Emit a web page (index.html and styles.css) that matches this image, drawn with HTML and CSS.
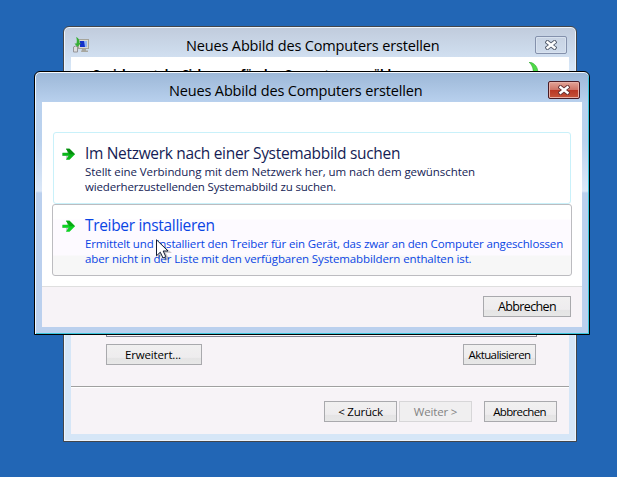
FILE: index.html
```html
<!DOCTYPE html>
<html lang="de">
<head>
<meta charset="utf-8">
<title>Neues Abbild des Computers erstellen</title>
<link rel="stylesheet" href="styles.css">
</head>
<body>
<main class="desktop">
  <section class="window wizard">
    <header class="titlebar">
      <svg class="app-icon" width="17" height="17" viewBox="0 0 17 17">
        <rect x="5.500" y="2.500" width="10" height="9" fill="#d9d9d2" stroke="#a5a49b"/>
        <rect x="7" y="4" width="7" height="6" fill="#1430c8"/>
        <path d="M11 4h3v6h-2z" fill="#8fb4f4"/>
        <path d="M9 12h4v1.500h2V15H8z" fill="#a7a79f"/>
        <path d="M.5 10q2-2 4 0v5h-4z" fill="#ddd" stroke="#95959a"/>
        <path d="M3 0c3 1 4 4 3.500 6H8L4.500 10 1.500 6.500h2C4 4 4 2 3 0z" fill="#37ae36"/>
      </svg>
      <h1 class="title wizard-title">Neues Abbild des Computers erstellen</h1>
      <button class="close" aria-label="Schließen">
        <svg width="12" height="10" viewBox="0 0 12 10"><path d="M2.500 2.200l7 5.600M9.500 2.200l-7 5.600" stroke="#525b6b" stroke-width="4.200" stroke-linecap="square"/><path d="M2.500 2.200l7 5.600M9.500 2.200l-7 5.600" stroke="#fff" stroke-width="2.400" stroke-linecap="square"/></svg>
      </button>
    </header>
    <div class="client wizard-client">
      <div class="banner">
        <h2 class="heading">Speicherort der Sicherung für den Computer auswählen</h2>
        <svg class="swoosh" width="12" height="16" viewBox="0 0 12 16"><path d="M0 0c6 1 9 5 9 12H4C5 7 3 3 0 0z" fill="#4fdc48" stroke="#2ba62c" stroke-width=".6"/></svg>
      </div>
      <div class="list"></div>
      <div class="row list-actions">
        <button class="btn wide">Erweitert...</button>
        <button class="btn refresh">Aktualisieren</button>
      </div>
      <footer class="row nav">
        <button class="btn back">&lt; Zurück</button>
        <button class="btn disabled" disabled>Weiter &gt;</button>
        <button class="btn cancel">Abbrechen</button>
      </footer>
    </div>
  </section>

  <section class="window dialog">
    <header class="titlebar">
      <h1 class="title dialog-title">Neues Abbild des Computers erstellen</h1>
      <button class="close red" aria-label="Schließen">
        <svg width="12" height="10" viewBox="0 0 12 10"><path d="M2.500 2.200l7 5.600M9.500 2.200l-7 5.600" stroke="#653033" stroke-width="4.200" stroke-linecap="square"/><path d="M2.500 2.200l7 5.600M9.500 2.200l-7 5.600" stroke="#fff" stroke-width="2.400" stroke-linecap="square"/></svg>
      </button>
    </header>
    <div class="client dialog-client">
      <div class="options">
        <a class="option">
          <svg class="arrow" width="16" height="15" viewBox="0 0 16 15"><path d="M1 6h5V2l1 3v6l-2 2V9H1z" fill="#c9c9cd"/><path d="M1.500 5.700h6L5 1.700h3.500L14 7.200l-5.500 5.500H5l2.500-4H1.500z" fill="#09b818"/><path d="M5 1.700h3.500L14 7.200H8.500z" fill="#078c0f"/></svg>
          <div class="copy">
            <h3>Im Netzwerk nach einer Systemabbild suchen</h3>
            <p class="search-1">Stellt eine Verbindung mit dem Netzwerk her, um nach dem gewünschten</p>
            <p class="search-2">wiederherzustellenden Systemabbild zu suchen.</p>
          </div>
        </a>
        <a class="option hover">
          <svg class="arrow" width="16" height="15" viewBox="0 0 16 15"><path d="M1 6h5V2l1 3v6l-2 2V9H1z" fill="#c9c9cd"/><path d="M1.500 5.700h6L5 1.700h3.500L14 7.200l-5.500 5.500H5l2.500-4H1.500z" fill="#0bd422"/><path d="M5 1.700h3.500L14 7.200H8.500z" fill="#08a814"/></svg>
          <div class="copy">
            <h3>Treiber installieren</h3>
            <p class="driver-1">Ermittelt und installiert den Treiber für ein Gerät, das zwar an den Computer angeschlossen</p>
            <p class="driver-2">aber nicht in der Liste mit den verfügbaren Systemabbildern enthalten ist.</p>
          </div>
        </a>
      </div>
      <footer class="row dialog-footer">
        <button class="btn big">Abbrechen</button>
      </footer>
    </div>
  </section>
  <svg class="cursor" width="16" height="23" viewBox="0 0 16 23"><path d="M2 2v18l4-4 3 6 4-2-3-6h6z" fill="#0003"/><path d="M.5.8v16l3.800-3.600L7 19l2.800-1.300L7.200 12H12z" fill="#fff" stroke="#111a33"/></svg>
</main>
</body>
</html>
```
FILE: styles.css
```css
* { box-sizing: border-box; }
body { margin: 0; font-family: "Open Sans", "Noto Sans", sans-serif; color: #000; }
h1, h2, h3, p { margin: 0; font-weight: 400; white-space: nowrap; }
button { font: inherit; padding: 0; }
.desktop { position: relative; width: 617px; height: 477px; background: #2266b5; overflow: hidden; }

.window { position: absolute; display: flex; flex-direction: column; border: 1px solid #43464b; border-radius: 6px 6px 0 0; padding: 0 7px 7px; }
.wizard { left: 63px; top: 26px; width: 514px; height: 416px; background: linear-gradient(#c0cbdc, #d6e6f7 40px); box-shadow: inset 0 0 0 1px #edf4fb; }
.dialog { left: 34px; top: 71px; width: 556px; height: 264px; border-color: #000; background: linear-gradient(#9cb7d7, #b9d1ee 31px, #bbd2ee 70px, #dce8f8 119px, #bbd0ee 121px); box-shadow: inset 0 1px #f5f9fd, inset 1px 0 #edf6ff, inset -1px -1px #3bc6dd; }
.titlebar { display: flex; align-items: center; flex: none; height: 30px; }
.app-icon { margin: 6px 0 0 2px; }
.title { flex: 1; font-size: 14.5px; line-height: 20px; letter-spacing: -.15px; }
.wizard-title { padding: 8px 0 0 96px; }
.dialog-title { padding: 8px 0 0 127px; }
.close { display: flex; align-items: center; justify-content: center; width: 32px; height: 18px; margin: 6px 2px 0 0; border: 1px solid #8491ac; border-radius: 2px; background: linear-gradient(#c8d3e3, #d0dcec); box-shadow: inset 0 0 0 1px #d8e2ef; }
.close.red { border-color: #491c25; background: linear-gradient(#e2a497, #cf7466 48%, #b93724 52%, #c5543a); box-shadow: inset 0 0 0 1px #e8afa6; }

.client { flex: 1; display: flex; flex-direction: column; background: #f7f3f7; min-height: 0; }
.banner { display: flex; justify-content: space-between; flex: none; height: 40px; padding: 5px 28px 0 22px; background: #fff; }
.heading { padding-top: 3px; font-size: 12px; line-height: 20px; font-weight: 700; letter-spacing: -.42px; }
.list { flex: none; width: 431px; height: 240px; margin-left: 35px; border: 1px solid #81808f; border-top: 0; }
.row { display: flex; align-items: center; }
.list-actions { justify-content: space-between; padding: 7px 33px 0 35px; height: 28px; }
.btn { display: flex; align-items: center; justify-content: center; width: 73px; height: 21px; border: 1px solid #a9a9ad; background: linear-gradient(#f1f0f0, #eeecee 65%, #e5e4e5 70%, #e7e7e7); font-size: 11.5px; line-height: 16px; white-space: nowrap; color: #000; }
.btn.wide { width: 96px; padding-right: 2px; letter-spacing: -.15px; }
.btn.refresh { letter-spacing: -.6px; }
.btn.back { letter-spacing: -.25px; }
.btn.big { width: 88px; font-size: 12.5px; letter-spacing: -.65px; }
.btn.disabled { border-color: #d7d6d8; background: #f0eff0; color: #838383; letter-spacing: -.15px; }
.nav { justify-content: flex-end; margin-top: 21px; height: 48px; border-top: 1px solid #a0a0a0; box-shadow: inset 0 1px #fff; padding: 2px 12px 0 0; gap: 2px; }
.nav .cancel { margin-left: 10px; padding-right: 2px; letter-spacing: -.65px; }

.dialog-client { background: #fff; }
.options { flex: none; height: 184px; padding: 30px 10px 0; }
.option { display: flex; height: 72px; margin: 0 1px; padding: 11px 0 0 7px; gap: 8px; border: 1px solid #c9f1fa; border-radius: 3px; color: #151c55; }
.option.hover { margin: 0; padding-left: 8px; border-color: #bcbcc0; color: #0a45e4; background: linear-gradient(#fff 14px, #fdfaff 15px 50px, #f7f7f7 51px); }
.arrow { flex: none; margin-top: 3px; }
.copy h3 { font-size: 15.5px; line-height: 18px; letter-spacing: -.32px; }
.copy p { font-size: 11.5px; line-height: 15px; }
.copy h3 + p { margin-top: 2px; }
.search-1 { letter-spacing: -.07px; }
.search-2 { letter-spacing: -.16px; }
.driver-1 { letter-spacing: -.145px; }
.driver-2 { letter-spacing: -.12px; }
.dialog-footer { flex: 1; justify-content: flex-end; padding: 0 11px 1px 0; border-top: 1px solid #dfdfdf; background: #f7f3f7; }
.cursor { position: absolute; left: 156px; top: 239px; }
```
